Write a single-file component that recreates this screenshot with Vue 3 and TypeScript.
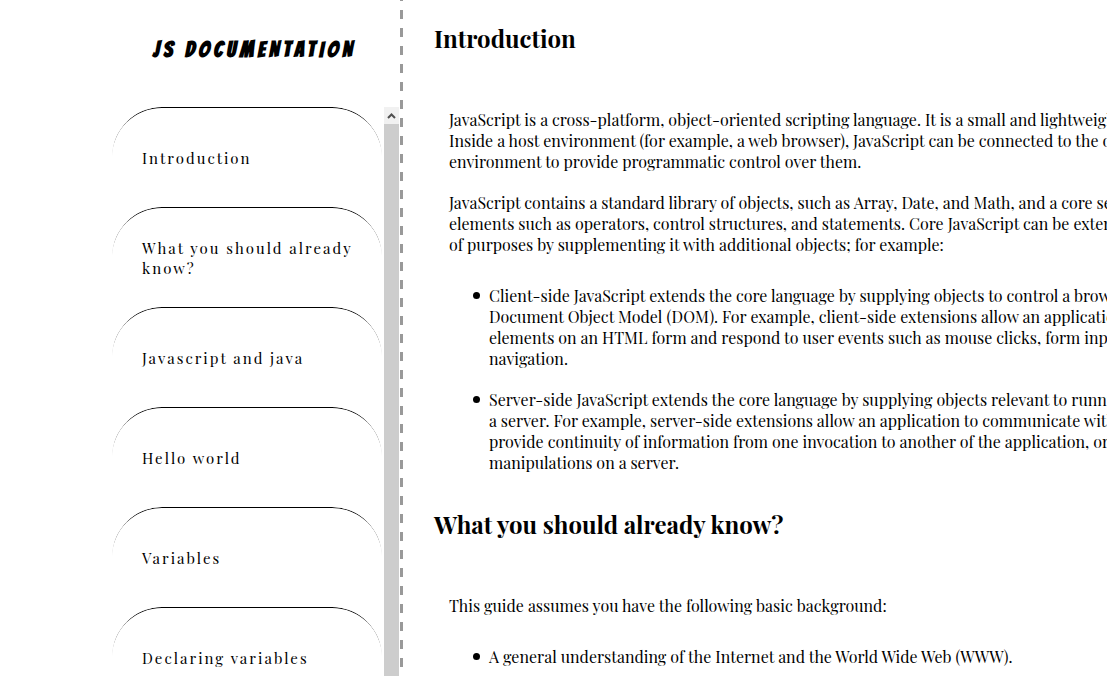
<script setup lang="ts">
interface Topic {
  id: string
  title: string
}

interface Section extends Topic {
  paragraphs: string[][]
  points: string[][]
}

const topics: Topic[] = [
  { id: 'introduction', title: 'Introduction' },
  { id: 'already-know', title: 'What you should already know?' },
  { id: 'javascript-and-java', title: 'Javascript and java' },
  { id: 'hello-world', title: 'Hello world' },
  { id: 'variables', title: 'Variables' },
  { id: 'declaring-variables', title: 'Declaring variables' },
]

const sections: Section[] = [
  {
    id: 'introduction',
    title: 'Introduction',
    paragraphs: [
      [
        'JavaScript is a cross-platform, object-oriented scripting language. It is a small and lightweight language.',
        'Inside a host environment (for example, a web browser), JavaScript can be connected to the objects of its',
        'environment to provide programmatic control over them.',
      ],
      [
        'JavaScript contains a standard library of objects, such as Array, Date, and Math, and a core set of language',
        'elements such as operators, control structures, and statements. Core JavaScript can be extended for a variety',
        'of purposes by supplementing it with additional objects; for example:',
      ],
    ],
    points: [
      [
        'Client-side JavaScript extends the core language by supplying objects to control a browser and its',
        'Document Object Model (DOM). For example, client-side extensions allow an application to place',
        'elements on an HTML form and respond to user events such as mouse clicks, form input, and page',
        'navigation.',
      ],
      [
        'Server-side JavaScript extends the core language by supplying objects relevant to running JavaScript on',
        'a server. For example, server-side extensions allow an application to communicate with a database,',
        'provide continuity of information from one invocation to another of the application, or perform file',
        'manipulations on a server.',
      ],
    ],
  },
  {
    id: 'already-know',
    title: 'What you should already know?',
    paragraphs: [['This guide assumes you have the following basic background:']],
    points: [['A general understanding of the Internet and the World Wide Web (WWW).']],
  },
]
</script>

<template>
  <div class="page">
    <aside class="sidebar">
      <h1 class="brand">JS DOCUMENTATION</h1>
      <div class="scroller">
        <nav class="topics" aria-label="Topics">
          <a v-for="topic in topics" :key="topic.id" class="topic" :href="'#' + topic.id">{{ topic.title }}</a>
        </nav>
        <div class="track">
          <button class="up" type="button" aria-label="Scroll up">
            <svg viewBox="0 0 15 17" width="15" height="17" aria-hidden="true">
              <path d="M4 11 L7.5 7.5 L11 11" fill="none" stroke="#505050" stroke-width="2" />
            </svg>
          </button>
        </div>
      </div>
    </aside>
    <div class="divider"></div>
    <main class="content">
      <section v-for="section in sections" :id="section.id" :key="section.id" class="section">
        <h2 class="heading">{{ section.title }}</h2>
        <div class="body">
          <p v-for="(lines, i) in section.paragraphs" :key="i" class="text">
            <span v-for="line in lines" :key="line" class="line">{{ line }}</span>
          </p>
          <ul class="points">
            <li v-for="(lines, i) in section.points" :key="i" class="point">
              <span v-for="line in lines" :key="line" class="line">{{ line }}</span>
            </li>
          </ul>
        </div>
      </section>
    </main>
  </div>
</template>

<style>
body {
  margin: 0;
  background: #fff;
}
</style>

<style scoped>
.page {
  display: flex;
  height: 100vh;
  overflow: hidden;
  color: #000;
  font-family: "Playfair Display", "Liberation Serif", serif;
}

.sidebar {
  display: flex;
  flex: 0 0 400px;
  flex-direction: column;
  box-sizing: border-box;
  padding-left: 112px;
}

.brand {
  margin: 0;
  padding: 37px 0 44px 41px;
  font-family: Bangers, "Liberation Sans Narrow", "Liberation Sans", sans-serif;
  font-size: 22px;
  font-weight: 700;
  line-height: 26px;
  letter-spacing: 4px;
  white-space: nowrap;
}

.scroller {
  display: flex;
  flex: 1;
  min-height: 0;
  padding-right: 1px;
  overflow: hidden;
}

.topics {
  flex: 1;
  padding-right: 2px;
}

.topic {
  position: relative;
  display: flex;
  align-items: center;
  box-sizing: border-box;
  height: 100px;
  padding: 1px 20px 0 30px;
  color: #000;
  font-size: 15px;
  line-height: 20px;
  letter-spacing: 2px;
  text-decoration: none;
}

/* Arched outline that fades out down both shoulders. */
.topic::before {
  content: "";
  position: absolute;
  inset: 0;
  border-top: 1px solid #000;
  border-radius: 50px;
  mask-image: linear-gradient(#000 28px, transparent 50px);
}

.track {
  flex: 0 0 15px;
  background: #cdcdcd;
}

.up {
  display: block;
  width: 100%;
  height: 17px;
  padding: 0;
  border: 0;
  background: #f1f1f1;
}

.up svg {
  display: block;
}

.divider {
  flex: 0 0 3px;
  background: repeating-linear-gradient(#999 0 1px, transparent 1px 10px, #999 10px 18px);
}

.content {
  flex: 1;
  min-width: 0;
  padding: 22px 0 0 31px;
  overflow: hidden;
}

.section {
  margin-bottom: 35px;
}

.heading {
  margin: 0 0 55px;
  font-size: 24px;
  font-weight: 700;
  line-height: 32px;
  white-space: nowrap;
}

.body {
  padding-left: 15px;
  font-size: 16px;
  line-height: 21px;
}

.text {
  margin: 0 0 20px;
}

.points {
  margin: 30px 0 0;
  padding-left: 24px;
  list-style: none;
}

.point {
  display: grid;
  grid-template-columns: 16px 1fr;
}

.point::before {
  content: "";
  grid-row: 1;
  align-self: center;
  width: 7px;
  height: 7px;
  border-radius: 50%;
  background: #000;
}

.point + .point {
  margin-top: 20px;
}

.line {
  display: block;
  grid-column: 2;
  white-space: nowrap;
}
</style>
